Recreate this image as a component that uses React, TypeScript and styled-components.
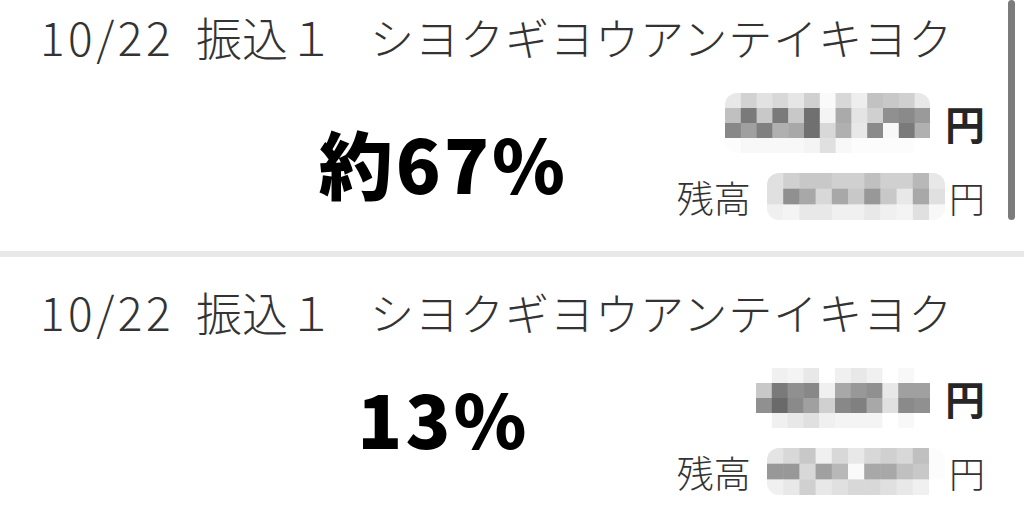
import React from 'react';
import styled, { createGlobalStyle } from 'styled-components';

const GlobalStyle = createGlobalStyle`
  html, body {
    margin: 0;
    padding: 0;
    background: #ffffff;
    overflow: hidden;
  }
  body {
    font-family: "Noto Sans CJK JP", "Noto Sans", sans-serif;
  }
`;

type Shade = string[];

interface Transaction {
  date: string;
  kind: string;
  payee: string;
  ratio: string;
  ratioShift: number;
  amount: Shade[];
  balance: Shade[];
}

const transactions: Transaction[] = [
  {
    date: '10/22',
    kind: '振込１',
    payee: 'シヨクギヨウアンテイキヨク',
    ratio: '約67%',
    ratioShift: 10,
    amount: [
      ['e8', 'd2', 'e2', 'd8', 'e6', 'd0', 'fa', 'd8', 'ee', 'c2', 'c8', 'd0', 'e8'],
      ['c0', '7a', 'c8', '7a', 'c8', '70', 'f4', 'aa', 'e4', 'd0', '90', '8a', '9a'],
      ['88', 'a0', '80', 'b0', 'a8', '70', 'd8', 'b0', 'e8', '8a', 'f8', '7a', 'b0'],
      ['fc', 'f8', 'f8', 'f8', 'f8', 'f4', 'e0', 'f8', 'fc', 'fc', 'fc', 'fc', 'ff'],
    ],
    balance: [
      ['e0', 'd0', 'c8', 'c8', 'd0', 'd0', 'c0', 'd0', 'd0', 'b8', 'e8'],
      ['e0', '90', 'a8', 'd8', 'a8', 'c8', '98', 'c8', 'e8', 'a8', 'e0'],
      ['f0', 'f4', 'e8', 'e8', 'f0', 'f0', 'e8', 'f0', 'f4', 'e0', 'f8'],
    ],
  },
  {
    date: '10/22',
    kind: '振込１',
    payee: 'シヨクギヨウアンテイキヨク',
    ratio: '13%',
    ratioShift: -30,
    amount: [
      ['ff', 'f0', 'f4', 'e8', 'ff', 'f0', 'e8', 'f0', 'ff', 'f8', 'ff'],
      ['c8', '7a', '90', '88', 'f0', 'a8', '98', '90', 'e8', 'a0', 'a0'],
      ['90', '6a', '8a', 'a0', 'd0', '88', '80', 'a8', 'e0', '8a', '90'],
      ['ff', 'f0', 'e8', 'e0', 'f0', 'f4', 'f4', 'f4', 'ff', 'f8', 'ff'],
    ],
    balance: [
      ['e4', 'd8', 'c8', 'f0', 'd8', 'e8', 'd8', 'd0', 'd8', 'c0', 'fc'],
      ['98', '98', 'd8', 'a0', 'b8', 'fa', 'a8', 'a8', 'c0', 'c8', 'fc'],
      ['f0', 'e8', 'd0', 'e8', 'e0', 'd8', 'd8', 'e0', 'e8', 'f0', 'ff'],
    ],
  },
];

const Screen = styled.div`
  position: relative;
  width: 1024px;
  height: 506px;
  overflow: hidden;
  background: #ffffff;
`;

const List = styled.div`
  display: flex;
  flex-direction: column;
  margin-top: -18px;
`;

const Row = styled.div`
  display: flex;
  flex-direction: column;
  padding: 27px 39px 31px 40px;
`;

const Divider = styled.div`
  height: 6px;
  background: #e8e8e8;
`;

const Header = styled.div`
  display: flex;
  align-items: baseline;
  gap: 22px;
  font-size: 46px;
  line-height: 55px;
  font-weight: 300;
  color: #333333;
  white-space: nowrap;
`;

const DateText = styled.span`
  letter-spacing: 3.5px;
`;

const Payee = styled.span`
  margin-left: 14px;
  font-size: 44px;
  letter-spacing: 1px;
`;

const Body = styled.div`
  display: flex;
  align-items: center;
  margin-top: 28px;
`;

const RatioArea = styled.div<{ $shift: number }>`
  flex: 1;
  display: flex;
  justify-content: center;
  padding-left: 170px;
  margin-top: ${({ $shift }) => $shift}px;
`;

const Ratio = styled.span`
  font-size: 74px;
  line-height: 80px;
  font-weight: 900;
  color: #000000;
  letter-spacing: 3px;
`;

const Amounts = styled.div`
  display: flex;
  flex-direction: column;
  align-items: flex-end;
  gap: 20px;
`;

const AmountLine = styled.div`
  display: flex;
  align-items: center;
  gap: 15px;
`;

const BalanceLine = styled.div`
  display: flex;
  align-items: center;
  gap: 16px;
`;

const YenBold = styled.span`
  font-size: 40px;
  line-height: 44px;
  font-weight: 700;
  color: #262626;
`;

const Label = styled.span`
  font-size: 37px;
  line-height: 44px;
  font-weight: 300;
  color: #333333;
`;

const Yen = styled.span`
  font-size: 36px;
  line-height: 44px;
  font-weight: 300;
  color: #333333;
  margin-left: -12px;
`;

const MosaicSvg = styled.svg`
  display: block;
  border-radius: 12px;
  overflow: hidden;
`;

const Scrollbar = styled.div`
  position: absolute;
  top: 0;
  right: 9px;
  width: 7px;
  height: 220px;
  border-radius: 4px;
  background: #7c7c7c;
`;

const Mosaic: React.FC<{ cells: Shade[]; cellW: number; cellH: number }> = ({ cells, cellW, cellH }) => {
  const cols = cells[0].length;
  const w = cols * cellW;
  const h = cells.length * cellH;
  return (
    <MosaicSvg width={w} height={h} viewBox={`0 0 ${w} ${h}`}>
      {cells.map((row, r) =>
        row.map((g, c) => (
          <rect
            key={`${r}-${c}`}
            x={c * cellW}
            y={r * cellH}
            width={cellW + 0.5}
            height={cellH + 0.5}
            fill={`#${g}${g}${g}`}
          />
        ))
      )}
    </MosaicSvg>
  );
};

const App: React.FC = () => {
  return (
    <Screen>
      <GlobalStyle />
      <List>
        {transactions.map((t, i) => (
          <React.Fragment key={i}>
            {i > 0 && <Divider />}
            <Row>
              <Header>
                <DateText>{t.date}</DateText>
                <span>{t.kind}</span>
                <Payee>{t.payee}</Payee>
              </Header>
              <Body>
                <RatioArea $shift={t.ratioShift}>
                  <Ratio>{t.ratio}</Ratio>
                </RatioArea>
                <Amounts>
                  <AmountLine>
                    <Mosaic cells={t.amount} cellW={15.8} cellH={15} />
                    <YenBold>円</YenBold>
                  </AmountLine>
                  <BalanceLine>
                    <Label>残高</Label>
                    <Mosaic cells={t.balance} cellW={16.2} cellH={15.7} />
                    <Yen>円</Yen>
                  </BalanceLine>
                </Amounts>
              </Body>
            </Row>
          </React.Fragment>
        ))}
      </List>
      <Scrollbar />
    </Screen>
  );
};

export default App;
